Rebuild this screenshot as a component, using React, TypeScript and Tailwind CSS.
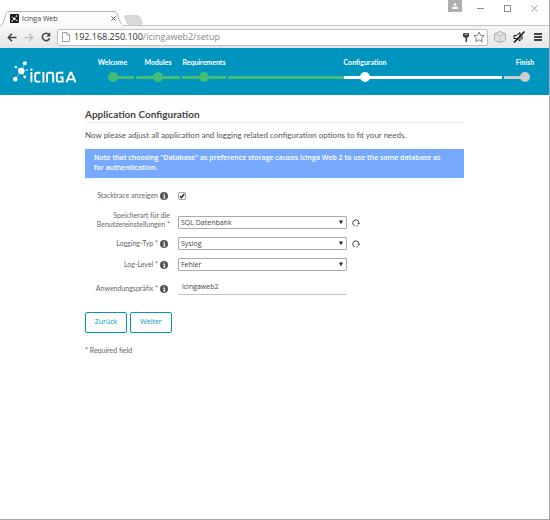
import type { ReactNode } from "react";

const bodyFont = "font-['Open_Sans','Noto_Sans',sans-serif]";
const latoFont = "font-[Lato,'Open_Sans',sans-serif]";

function TabStrip() {
  return (
    <div className="flex h-[26px] items-start justify-between border-b border-[#c4c4c4] bg-white">
      <div className="flex h-[26px] items-end">
        <div className="relative h-[15px] w-[124px]">
          <svg className="absolute inset-0" width="126" height="15" viewBox="0 0 126 15" aria-hidden="true">
            <path d="M0 15 C3 14 3 12 5 6 C6 2 6 0.5 9 0.5 H114 C117 0.5 117 2 118 5 C120 11 121 14 125 15" fill="#fbfbfb" stroke="#b4b4b4" />
          </svg>
          <div className="relative flex h-[15px] items-center pl-[10px] pr-[8px]">
            <svg width="9" height="9" viewBox="0 0 9 9" aria-hidden="true">
              <rect width="9" height="9" rx="1" fill="#1c1c1c" />
              <path d="M4 5 L6.5 2 M4 5 L2 3 M4 5 L2.2 7 M4 5 L7 6.5" stroke="#fff" strokeWidth="0.5" />
              <circle cx="4.2" cy="4.8" r="1.3" fill="#fff" />
              <circle cx="6.6" cy="2" r="0.8" fill="#fff" />
              <circle cx="2.1" cy="7" r="0.8" fill="#fff" />
              <circle cx="2" cy="3" r="0.5" fill="#fff" />
              <circle cx="7" cy="6.4" r="0.6" fill="#fff" />
            </svg>
            <span className="ml-[3px] flex-1 text-[7px] leading-[10px] text-[#444]">Icinga Web</span>
            <button aria-label="Close tab" className="flex">
              <svg width="5" height="5" viewBox="0 0 5 5" aria-hidden="true">
                <path d="M0.5 0.5 L4.5 4.5 M4.5 0.5 L0.5 4.5" stroke="#555" />
              </svg>
            </button>
          </div>
        </div>
        <button aria-label="New tab" className="mb-[1px] flex">
          <svg width="20" height="10" viewBox="0 0 20 10" aria-hidden="true">
            <path d="M0.5 2 Q0.5 0.5 2 0.5 H13 Q15.5 0.5 16.5 2.5 L18 7.5 Q18.5 9.5 17 9.5 H5 Q3.5 9.5 2.6 7.5 Z" fill="#d9d9d9" stroke="#cccccc" strokeWidth="0.6" />
          </svg>
        </button>
      </div>
      <div className="flex items-start">
        <button aria-label="Profile" className="mr-[15px] flex h-3 w-[14px] items-center justify-center bg-[#b0b0b0]">
          <svg width="6" height="6" viewBox="0 0 6 6" fill="#fff" aria-hidden="true">
            <circle cx="3" cy="1.5" r="1.3" />
            <path d="M0.3 6 V4.8 Q0.5 3.5 3 3.5 T5.7 4.8 V6 Z" />
          </svg>
        </button>
        <div className="mt-[5px] flex items-center gap-[20px] pr-[11px] text-[#8c8c8c]">
          <button aria-label="Minimize" className="flex">
            <svg width="7" height="7" viewBox="0 0 7 7" aria-hidden="true"><path d="M0 3.5 H7" stroke="currentColor" /></svg>
          </button>
          <button aria-label="Maximize" className="flex">
            <svg width="7" height="7" viewBox="0 0 7 7" aria-hidden="true"><rect x="0.5" y="0.5" width="6" height="6" fill="none" stroke="currentColor" /></svg>
          </button>
          <button aria-label="Close" className="flex">
            <svg width="7" height="7" viewBox="0 0 7 7" aria-hidden="true"><path d="M0.5 0.5 L6.5 6.5 M6.5 0.5 L0.5 6.5" stroke="currentColor" strokeWidth="0.8" /></svg>
          </button>
        </div>
      </div>
    </div>
  );
}

function Toolbar() {
  return (
    <div className="flex h-[22px] items-center bg-linear-to-b from-[#f7f7f7] to-[#e6e6e6] px-[7px]">
      <button aria-label="Back" className="flex">
        <svg width="10" height="9" viewBox="0 0 10 9" fill="none" stroke="#444" strokeWidth="1.5" aria-hidden="true">
          <path d="M9.5 4.5 H1.5 M5 0.8 L1.3 4.5 L5 8.2" />
        </svg>
      </button>
      <button aria-label="Forward" className="ml-[7px] flex">
        <svg width="10" height="9" viewBox="0 0 10 9" fill="none" stroke="#c2c2c2" strokeWidth="1.5" aria-hidden="true">
          <path d="M0.5 4.5 H8.5 M5 0.8 L8.7 4.5 L5 8.2" />
        </svg>
      </button>
      <button aria-label="Reload" className="ml-[7px] flex">
        <svg width="10" height="10" viewBox="0 0 10 10" aria-hidden="true">
          <path d="M8 2.6 A3.7 3.7 0 1 0 8.6 6.2" fill="none" stroke="#444" strokeWidth="1.6" />
          <path d="M9.3 0.3 V4.4 H5.2 Z" fill="#444" />
        </svg>
      </button>
      <div className="ml-[6px] flex h-[17px] flex-1 items-center rounded-xs border border-[#c0c0c0] bg-white pr-[2px] pl-[4px]">
        <svg width="8" height="10" viewBox="0 0 8 10" fill="#fff" stroke="#8a8a8a" strokeWidth="0.8" aria-hidden="true">
          <path d="M0.5 0.5 H5 L7.5 3 V9.5 H0.5 Z M5 0.5 V3 H7.5" />
        </svg>
        <span className="ml-[4px] flex-1 text-[9px] leading-3 text-[#888]">
          <span className="text-[#333]">192.168.250.100</span>/icingaweb2/setup
        </span>
        <svg width="6" height="9" viewBox="0 0 6 9" fill="#444" aria-hidden="true">
          <path d="M0 1 Q0 0 1 0 H5 Q6 0 6 1 V3 Q6 4.5 4 4.8 V9 H2.4 V4.8 Q0 4.5 0 3 Z" />
          <path d="M1.5 1.3 H4.5" stroke="#ddd" strokeWidth="0.8" />
        </svg>
        <button aria-label="Bookmark" className="ml-[4px] flex">
          <svg width="12" height="12" viewBox="0 0 12 12" fill="none" stroke="#777" strokeWidth="0.9" aria-hidden="true">
            <path d="M6 0.9 L7.5 4.3 L11.2 4.7 L8.4 7.1 L9.3 10.8 L6 8.8 L2.7 10.8 L3.6 7.1 L0.8 4.7 L4.5 4.3 Z" />
          </svg>
        </button>
      </div>
      <button aria-label="Extension" className="ml-[6px] flex">
        <svg width="12" height="12" viewBox="0 0 12 12" fill="#e4e4e4" stroke="#9b9b9b" strokeWidth="0.8" aria-hidden="true">
          <path d="M6 0.5 Q6.3 0.5 11 2.6 Q11.4 3 11.4 3.5 V8.6 Q11 9.8 6 11.6 Q1 9.8 0.6 8.6 V3.5 Q0.6 3 1 2.6 Z" />
          <path d="M1 3 L6 5 L11 3 M6 5 V11" fill="none" stroke="#b5b5b5" />
        </svg>
      </button>
      <button aria-label="Muted" className="ml-[7px] flex">
        <svg width="12" height="12" viewBox="0 0 12 12" fill="none" stroke="#111" aria-hidden="true">
          <path d="M1 4.5 H3.5 L7 1.5 V10 L3.5 7.5 H1 Z M9 4.5 V8.5" strokeWidth="1" />
          <path d="M11.5 0.5 L1 11.5" strokeWidth="1.4" />
        </svg>
      </button>
      <button aria-label="Menu" className="ml-[9px] flex">
        <svg width="8" height="8" viewBox="0 0 8 8" stroke="#444" strokeWidth="2" aria-hidden="true">
          <path d="M0 1 H8 M0 4 H8 M0 7 H8" />
        </svg>
      </button>
    </div>
  );
}

function IcingaLogo() {
  return (
    <div className="flex w-[90px] shrink-0 items-center pl-[13px]">
      <svg width="64" height="22" viewBox="0 0 64 22" role="img" aria-label="Icinga" fill="#fff" stroke="#fff">
        <g stroke="none">
          <circle cx="8.3" cy="10" r="3.2" />
          <circle cx="11.8" cy="2.2" r="2" />
          <circle cx="2.3" cy="18.2" r="2.4" />
          <circle cx="2.8" cy="6" r="1.2" />
          <circle cx="11.8" cy="16" r="1.4" />
          <circle cx="14" cy="9" r="0.8" />
        </g>
        <path d="M8.3 10 L11.8 2.2 M8.3 10 L2.3 18.2 M8.3 10 L2.8 6 M8.3 10 L11.8 16 M8.3 10 L14 9" strokeWidth="0.5" />
        <circle cx="18.4" cy="8.6" r="1.2" stroke="none" />
        <g fill="none" strokeWidth="1.9">
          <path d="M18.4 11 V21.4" />
          <path d="M27.4 11.8 H24.4 Q22.2 11.8 22.2 14 V18.4 Q22.2 20.6 24.4 20.6 H27.4" />
          <path d="M30.4 11 V21.4" />
          <path d="M34 21.4 V14 Q34 11.8 36.2 11.8 H38 Q40.2 11.8 40.2 14 V21.4" />
          <path d="M50.4 11.8 H46 Q43.8 11.8 43.8 14 V18.4 Q43.8 20.6 46 20.6 H49.6 V16.4 H47" />
          <path d="M53.4 21.4 L57.4 11.6 H58.4 L62.6 21.4 M54.8 18.4 H61" />
        </g>
      </svg>
    </div>
  );
}

function Step({ label, className, left, right, dot }: { label: string; className: string; left: string; right: string; dot: string }) {
  return (
    <li className={`flex flex-col items-center ${className}`}>
      <span className="text-[7px] leading-[10px] font-bold whitespace-nowrap text-white">{label}</span>
      <div className="relative mt-[5px] flex h-[10px] w-full items-center px-px">
        <span className={`h-[3px] flex-1 ${left}`} />
        <span className={`h-[3px] flex-1 ${right}`} />
        <span className={`absolute left-1/2 size-[10px] -translate-x-1/2 rounded-full ${dot}`} />
      </div>
    </li>
  );
}

function WizardHeader() {
  return (
    <header className="flex h-[47px] bg-[#0095bf]">
      <IcingaLogo />
      <ol className={`flex flex-1 pt-[9px] pr-[2px] ${latoFont}`}>
        <Step label="Welcome" className="w-[45px]" left="" right="bg-[#44bb77]" dot="bg-[#44bb77]" />
        <Step label="Modules" className="w-[46px]" left="bg-[#44bb77]" right="bg-[#44bb77]" dot="bg-[#44bb77]" />
        <Step label="Requirements" className="w-[46px]" left="bg-[#44bb77]" right="bg-[#44bb77]" dot="bg-[#44bb77]" />
        <Step label="Configuration" className="flex-1" left="bg-linear-to-r from-[#44bb77] from-85% to-white to-85%" right="bg-white" dot="bg-white" />
        <Step label="Finish" className="w-[44px]" left="bg-[#cccccc]" right="" dot="bg-[#cccccc]" />
      </ol>
    </header>
  );
}

function InfoIcon() {
  return (
    <svg width="8" height="8" viewBox="0 0 8 8" className="shrink-0" aria-hidden="true">
      <circle cx="4" cy="4" r="4" fill="#555" />
      <path d="M3 3.3 H4.5 V6 M3 6.1 H5.3" stroke="#fff" strokeWidth="0.9" fill="none" />
      <circle cx="4.1" cy="1.8" r="0.6" fill="#fff" />
    </svg>
  );
}

function RefreshIcon() {
  return (
    <svg width="8" height="8" viewBox="0 0 8 8" aria-hidden="true">
      <path d="M2.9 6.9 A3.1 3.1 0 1 1 6.9 4.2 M4.4 7.1 A3.1 3.1 0 0 0 6 6.4" fill="none" stroke="#444" strokeWidth="1" />
      <path d="M5.2 3.9 H8 L6.8 5.8 Z" fill="#444" />
    </svg>
  );
}

function Row({ id, label, info = true, children }: { id: string; label: ReactNode; info?: boolean; children: ReactNode }) {
  return (
    <div className="flex items-end gap-[8px]">
      <div className={`flex min-h-[13px] w-[85px] items-center justify-end gap-[2px] ${info ? "pr-[2px]" : ""}`}>
        <label htmlFor={id} className={`text-right text-[7px] leading-[9px] whitespace-nowrap text-[#666] ${latoFont}`}>{label}</label>
        {info && <InfoIcon />}
      </div>
      <div className="flex min-h-[13px] flex-1 items-center gap-[5px]">{children}</div>
    </div>
  );
}

function Select({ id, value }: { id: string; value: string }) {
  return (
    <div className="relative w-[169px]">
      <select id={id} defaultValue={value} className="block h-[13px] w-full appearance-none rounded-[1px] border border-[#aaa] bg-white pl-[2px] text-[7px] leading-[11px] text-[#444]">
        <option>{value}</option>
      </select>
      <svg className="pointer-events-none absolute top-[4px] right-[4px]" width="4" height="5" viewBox="0 0 4 5" aria-hidden="true">
        <path d="M0 0.5 H4 L2 4.3 Z" fill="#222" />
      </svg>
    </div>
  );
}

function Refresh() {
  return (
    <button type="button" aria-label="Reload options" className="flex"><RefreshIcon /></button>
  );
}

export default function App() {
  return (
    <div className={`flex min-h-screen flex-col border-r border-b border-[#aaa] bg-white ${bodyFont}`}>
      <TabStrip />
      <Toolbar />
      <WizardHeader />
      <main className="mx-auto w-full max-w-[379px] pt-[12px]">
        <h1 className={`border-b border-[#eee] pb-[1px] text-[10px] leading-[14px] font-bold text-[#444] ${latoFont}`}>Application Configuration</h1>
        <p className={`mt-[6px] text-[8px] leading-[12px] text-[#555] ${latoFont}`}>
          Now please adjust all application and logging related configuration options to fit your needs.
        </p>
        <div className="mt-[8px] bg-[#77aaff] pt-[4px] pr-[16px] pb-[5px] pl-[9px] text-[7px] leading-[10px] font-semibold text-white">
          Note that choosing "Database" as preference storage causes Icinga Web 2 to use the same database as for authentication.
        </div>
        <form className="mt-[11px]" onSubmit={(e) => e.preventDefault()}>
          <Row id="stacktrace" label="Stacktrace anzeigen">
            <span className="relative flex">
              <input id="stacktrace" type="checkbox" defaultChecked className="peer size-[8px] appearance-none rounded-[1px] border border-[#aaa] bg-[#f4f4f4]" />
              <svg className="pointer-events-none absolute inset-0 hidden peer-checked:block" width="8" height="8" viewBox="0 0 8 8" aria-hidden="true">
                <path d="M2 4 L3.5 5.7 L6.3 1.8" fill="none" stroke="#222" strokeWidth="1.3" />
              </svg>
            </span>
          </Row>
          <div className="mt-[9px] flex flex-col gap-[8px]">
            <Row id="storage" info={false} label={<>Speicherart für die<br />Benutzereinstellungen *</>}>
              <Select id="storage" value="SQL Datenbank" />
              <Refresh />
            </Row>
            <Row id="logtype" label="Logging-Typ *">
              <Select id="logtype" value="Syslog" />
              <Refresh />
            </Row>
            <Row id="loglevel" label="Log-Level *">
              <Select id="loglevel" value="Fehler" />
            </Row>
            <Row id="prefix" label="Anwendungspräfix *">
              <input id="prefix" type="text" defaultValue="icingaweb2" className="h-[16px] w-[169px] border-b border-[#bcc4c8] bg-transparent pl-[4px] text-[7px] leading-[11px] text-[#444]" />
            </Row>
          </div>
          <div className="mt-[17px] flex gap-[3px]">
            <button type="button" className="h-[21px] w-[42px] rounded-[2px] border border-[#0095bf] text-[7px] text-[#0095bf]">Zurück</button>
            <button type="submit" className="h-[21px] w-[42px] rounded-[2px] border border-[#0095bf] text-[7px] text-[#0095bf]">Weiter</button>
          </div>
          <p className={`mt-[12px] text-[7px] leading-[10px] text-[#666] ${latoFont}`}>* Required field</p>
        </form>
      </main>
    </div>
  );
}
